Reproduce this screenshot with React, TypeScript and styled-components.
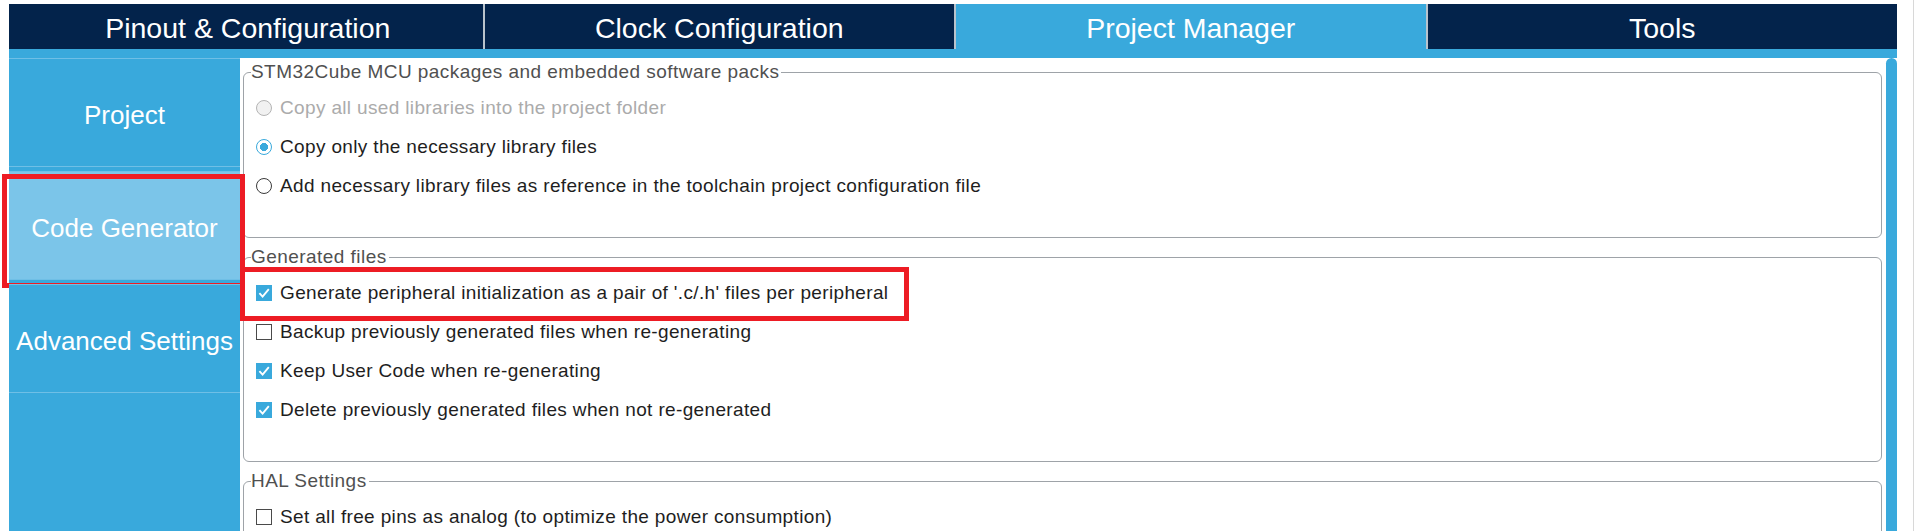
import React from 'react';
import styled, { createGlobalStyle } from 'styled-components';

const palette = {
  navy: '#03234b',
  blue: '#39a9dc',
  blueLight: '#7bc5e9',
  blueLine: '#6fbfe6',
  red: '#ed1c24',
  text: '#1e1e1e',
  legend: '#505050',
  disabled: '#ababab',
  border: '#9ea3a8',
};

const GlobalStyle = createGlobalStyle`
  body {
    margin: 0;
    background: #fff;
    font-family: 'Liberation Sans', Arial, sans-serif;
  }
`;

const tabs = ['Pinout & Configuration', 'Clock Configuration', 'Project Manager', 'Tools'];
const menu = ['Project', 'Code Generator', 'Advanced Settings'];

type Option = { label: string; state: 'on' | 'off' | 'disabled'; marked?: boolean };

const packOptions: Option[] = [
  { label: 'Copy all used libraries into the project folder', state: 'disabled' },
  { label: 'Copy only the necessary library files', state: 'on' },
  {
    label: 'Add necessary library files as reference in the toolchain project configuration file',
    state: 'off',
  },
];

const fileOptions: Option[] = [
  {
    label: "Generate peripheral initialization as a pair of '.c/.h' files per peripheral",
    state: 'on',
    marked: true,
  },
  { label: 'Backup previously generated files when re-generating', state: 'off' },
  { label: 'Keep User Code when re-generating', state: 'on' },
  { label: 'Delete previously generated files when not re-generated', state: 'on' },
];

const halOptions: Option[] = [
  { label: 'Set all free pins as analog (to optimize the power consumption)', state: 'off' },
];

const App = () => {
  return (
    <>
      <GlobalStyle />
      <StWindow>
        <StTabBar>
          {tabs.map((t) => (
            <StTab key={t} $active={t === 'Project Manager'}>
              {t}
            </StTab>
          ))}
        </StTabBar>
        <StMain>
          <StSidebar>
            {menu.map((m) => (
              <StSideItem key={m} $selected={m === 'Code Generator'}>
                {m}
                {m === 'Code Generator' && <StSideMark />}
              </StSideItem>
            ))}
          </StSidebar>
          <StPanel>
            <StScroll>
              <StGroup>
                <StLegend>STM32Cube MCU packages and embedded software packs</StLegend>
                {packOptions.map((o) => (
                  <StRow key={o.label}>
                    <StRadio $state={o.state} />
                    <StLabel $disabled={o.state === 'disabled'}>{o.label}</StLabel>
                  </StRow>
                ))}
              </StGroup>
              <StGroup>
                <StLegend>Generated files</StLegend>
                {fileOptions.map((o) => (
                  <CheckRow key={o.label} option={o} />
                ))}
              </StGroup>
              <StGroup>
                <StLegend>HAL Settings</StLegend>
                {halOptions.map((o) => (
                  <CheckRow key={o.label} option={o} />
                ))}
              </StGroup>
            </StScroll>
            <StScrollTrack>
              <StThumb />
            </StScrollTrack>
          </StPanel>
        </StMain>
      </StWindow>
    </>
  );
};

const CheckRow = ({ option }: { option: Option }) => (
  <StRow>
    <StCheck $checked={option.state === 'on'}>
      {option.state === 'on' && (
        <svg width='16' height='16' viewBox='0 0 16 16'>
          <polyline points='3.4,8.2 6.6,11.6 12.8,4.2' fill='none' stroke='#fff' strokeWidth='1.9' />
        </svg>
      )}
    </StCheck>
    <StLabel>{option.label}</StLabel>
    {option.marked && <StRowMark />}
  </StRow>
);

export default App;

const StWindow = styled.div`
  width: 1914px;
  height: 531px;
  box-sizing: border-box;
  padding: 4px 16px 0 9px;
  border-right: 1px solid #d8d8d8;
  display: flex;
  flex-direction: column;
  overflow: hidden;
`;

const StTabBar = styled.div`
  height: 45px;
  display: flex;
  padding-left: 4px;
  background: ${palette.navy};
`;

const StTab = styled.div<{ $active?: boolean }>`
  flex: 1;
  display: flex;
  align-items: center;
  justify-content: center;
  padding-top: 4px;
  background: ${(p) => (p.$active ? palette.blue : palette.navy)};
  color: #fff;
  font-size: 28.5px;
  & + & {
    border-left: 2px solid #b9c3cc;
  }
`;

const StMain = styled.div`
  flex: 1;
  display: flex;
  padding-top: 9px;
  background: ${palette.blue};
  min-height: 0;
`;

const StSidebar = styled.div`
  width: 231px;
  display: flex;
  flex-direction: column;
  gap: 4px;
`;

const StSideItem = styled.div<{ $selected?: boolean }>`
  position: relative;
  height: 109px;
  box-sizing: border-box;
  padding-top: 6px;
  border-top: 1px solid ${palette.blueLine};
  border-bottom: 1px solid ${palette.blueLine};
  display: flex;
  align-items: center;
  justify-content: center;
  background: ${(p) => (p.$selected ? palette.blueLight : palette.blue)};
  color: #fff;
  font-size: 26px;
`;

const StSideMark = styled.div`
  position: absolute;
  left: -7px;
  right: -5px;
  top: 2px;
  bottom: -9px;
  border: 5px solid ${palette.red};
  pointer-events: none;
`;

const StPanel = styled.div`
  flex: 1;
  display: flex;
  background: #fff;
  min-width: 0;
`;

const StScroll = styled.div`
  flex: 1;
  display: flex;
  flex-direction: column;
  gap: 8px;
  padding: 3px 4px 0 3px;
  min-width: 0;
`;

const StGroup = styled.fieldset`
  margin: 0;
  min-width: 0;
  padding: 5px 13px 32px 12px;
  border: 1px solid ${palette.border};
  border-radius: 6px;
`;

const StLegend = styled.legend`
  margin-left: -5px;
  padding: 0 2px 0 0;
  line-height: 22px;
  font-size: 19px;
  letter-spacing: 0.45px;
  color: ${palette.legend};
`;

const StRow = styled.div`
  position: relative;
  height: 39px;
  display: flex;
  align-items: center;
  gap: 8px;
`;

const StLabel = styled.span<{ $disabled?: boolean }>`
  font-size: 19px;
  letter-spacing: 0.35px;
  white-space: nowrap;
  color: ${(p) => (p.$disabled ? palette.disabled : palette.text)};
`;

const StRadio = styled.span<{ $state: Option['state'] }>`
  width: 16px;
  height: 16px;
  flex: none;
  box-sizing: border-box;
  border-radius: 50%;
  border: ${(p) =>
    p.$state === 'on'
      ? `1.6px solid ${palette.blue}`
      : p.$state === 'disabled'
        ? '1px solid #b4b4b4'
        : '1px solid #3a3a3a'};
  background: ${(p) =>
    p.$state === 'on'
      ? `radial-gradient(circle, ${palette.blue} 0 3.8px, #fff 4.3px)`
      : p.$state === 'disabled'
        ? '#f1f1f1'
        : '#fff'};
`;

const StCheck = styled.span<{ $checked?: boolean }>`
  width: 16px;
  height: 16px;
  flex: none;
  box-sizing: border-box;
  display: flex;
  border: ${(p) => (p.$checked ? 'none' : '1px solid #4a4a4a')};
  background: ${(p) => (p.$checked ? palette.blue : '#fff')};
`;

const StRowMark = styled.div`
  position: absolute;
  left: -16px;
  top: -6px;
  width: 669px;
  height: 54px;
  box-sizing: border-box;
  border: 5px solid ${palette.red};
  pointer-events: none;
`;

const StScrollTrack = styled.div`
  width: 11px;
  display: flex;
`;

const StThumb = styled.div`
  flex: 1;
  background: ${palette.blue};
  border-radius: 6px 6px 0 0;
`;
